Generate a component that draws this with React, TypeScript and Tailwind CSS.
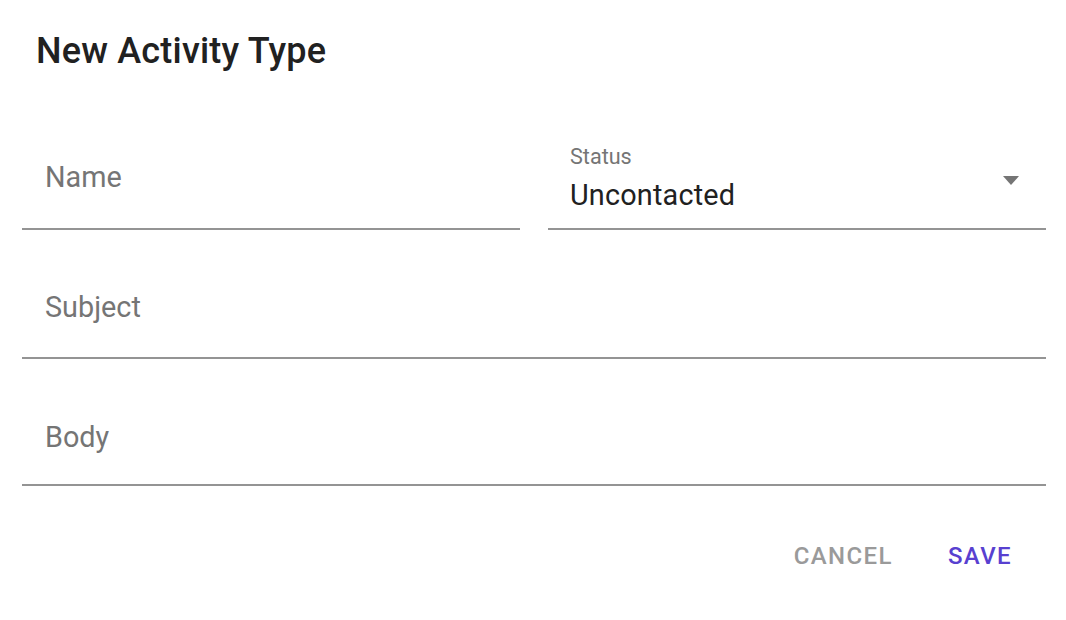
import { useState } from "react";

const ArrowDrop = () => (
  <svg width="16" height="9" viewBox="0 0 16 9" className="shrink-0 mt-[48px] mr-[27px]">
    <path d="M0 0 L16 0 L8 9 Z" fill="#757575" />
  </svg>
);

function TextField({ label, top }: { label: string; top: string }) {
  return (
    <div className={`h-[102px] border-b-2 border-[#949494] pl-[23px] ${top}`}>
      <p className="text-[28.8px] leading-[29px] text-[#757575]">{label}</p>
    </div>
  );
}

function StatusSelect() {
  const [value] = useState("Uncontacted");
  return (
    <div className="h-[102px] border-b-2 border-[#949494] flex justify-between">
      <div className="pl-[22px] pt-[18px] flex flex-col">
        <span className="text-[21.6px] leading-[22px] text-[#757575]">Status</span>
        <span className="mt-[13px] text-[28.8px] leading-[29px] tracking-[0.2px] text-[#212121]">{value}</span>
      </div>
      <ArrowDrop />
    </div>
  );
}

const App = () => {
  return (
    <div className="w-[1066px] h-[620px] bg-white font-['Roboto',sans-serif] overflow-hidden">
      <h2 className="pl-[36px] pt-[33px] text-[36px] leading-[36px] font-medium tracking-[0.2px] text-[#212121]">
        New Activity Type
      </h2>
      <div className="ml-[22px] w-[1024px] mt-[59px] flex flex-col">
        <div className="grid grid-cols-2 gap-[28px]">
          <TextField label="Name" top="pt-[35px]" />
          <StatusSelect />
        </div>
        <div className="mt-[27px]">
          <TextField label="Subject" top="pt-[36px]" />
        </div>
        <div className="mt-[25px]">
          <TextField label="Body" top="pt-[39px]" />
        </div>
      </div>
      <div className="mt-[58px] flex justify-end gap-[55px] pr-[54px]">
        <button className="text-[24px] leading-[24px] font-medium tracking-[1.4px] text-[#9a9a9a]">
          CANCEL
        </button>
        <button className="text-[24px] leading-[24px] font-medium tracking-[1.4px] text-[#5840d0]">
          SAVE
        </button>
      </div>
    </div>
  );
};

export default App;
